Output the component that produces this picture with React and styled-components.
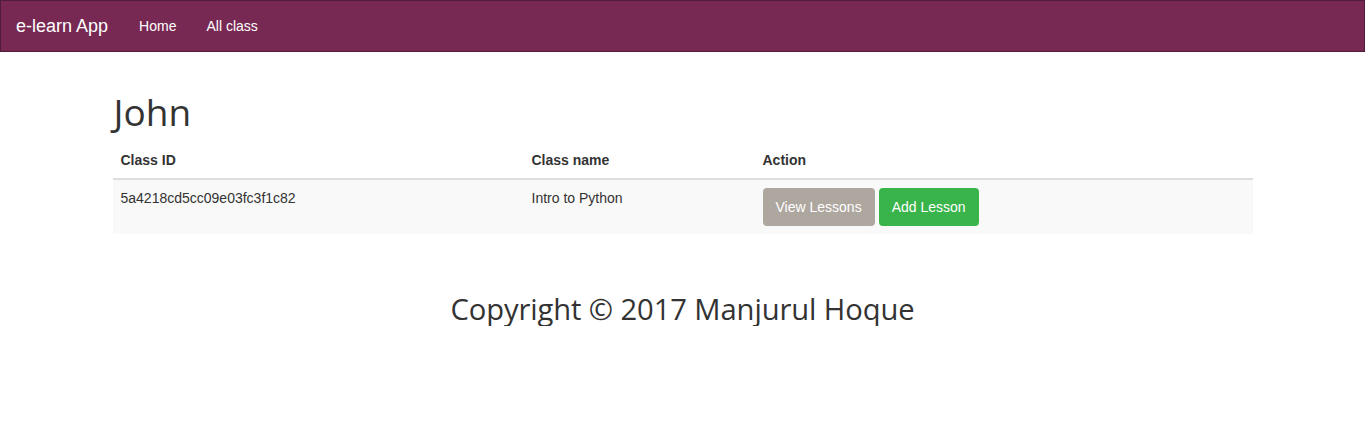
import React from "react";
import styled, { createGlobalStyle } from "styled-components";

const Global = createGlobalStyle`
  * { box-sizing: border-box; }
  body {
    margin: 0;
    font-family: "Liberation Sans", Arial, sans-serif;
    font-size: 14px;
    line-height: 1.42857;
    color: #333;
    background: #fff;
  }
`;

const Navbar = styled.nav`
  display: flex;
  align-items: center;
  height: 52px;
  background: #772953;
  border: 1px solid #511c39;
  padding: 0 15px;
  margin-bottom: 20px;
`;

const Brand = styled.a`
  color: #fff;
  font-size: 18px;
  line-height: 20px;
  padding: 15px 16px 15px 0;
  text-decoration: none;
`;

const NavLink = styled.a`
  color: #fff;
  font-size: 14px;
  line-height: 20px;
  padding: 15px;
  text-decoration: none;
`;

const Container = styled.main`
  width: 1170px;
  margin: 0 auto;
  padding: 20px 15px 0;
`;

const Title = styled.h1`
  font-family: "Open Sans", "Liberation Sans", sans-serif;
  font-weight: 400;
  font-size: 37px;
  line-height: 39.6px;
  margin: 0 0 10px 1px;
  color: #333;
`;

const Table = styled.table`
  width: 100%;
  border-collapse: collapse;
  border-spacing: 0;
  margin-bottom: 20px;
`;

const Th = styled.th`
  text-align: left;
  font-weight: 700;
  padding: 8px;
  line-height: 20px;
  border-bottom: 2px solid #ddd;
  width: ${(p) => p.$w || "auto"};
`;

const Tr = styled.tr`
  background: ${(p) => (p.$striped ? "#f9f9f9" : "transparent")};
`;

const Td = styled.td`
  padding: 8px;
  line-height: 20px;
  vertical-align: top;
`;

const Button = styled.button`
  display: inline-block;
  font-family: "Liberation Sans", Arial, sans-serif;
  font-size: 14px;
  line-height: 20px;
  padding: 9px 13px;
  border: none;
  border-radius: 4px;
  color: #fff;
  background: ${(p) => (p.$variant === "success" ? "#38b44a" : "#aea79f")};
  margin-right: 4px;
  cursor: pointer;
`;

const Footer = styled.footer`
  text-align: center;
  font-family: "Open Sans", "Liberation Sans", sans-serif;
  font-size: 29.2px;
  line-height: 33px;
  color: #333;
  padding-top: 39px;
  letter-spacing: -0.1px;
`;

export default function App() {
  return (
    <>
      <Global />
      <Navbar>
        <Brand href="#">e-learn App</Brand>
        <NavLink href="#">Home</NavLink>
        <NavLink href="#">All class</NavLink>
      </Navbar>
      <Container>
        <Title>John</Title>
        <Table>
          <thead>
            <tr>
              <Th $w="411px">Class ID</Th>
              <Th $w="231px">Class name</Th>
              <Th>Action</Th>
            </tr>
          </thead>
          <tbody>
            <Tr $striped>
              <Td>5a4218cd5cc09e03fc3f1c82</Td>
              <Td>Intro to Python</Td>
              <Td>
                <Button>View Lessons</Button>
                <Button $variant="success">Add Lesson</Button>
              </Td>
            </Tr>
          </tbody>
        </Table>
        <Footer>Copyright © 2017 Manjurul Hoque</Footer>
      </Container>
    </>
  );
}
